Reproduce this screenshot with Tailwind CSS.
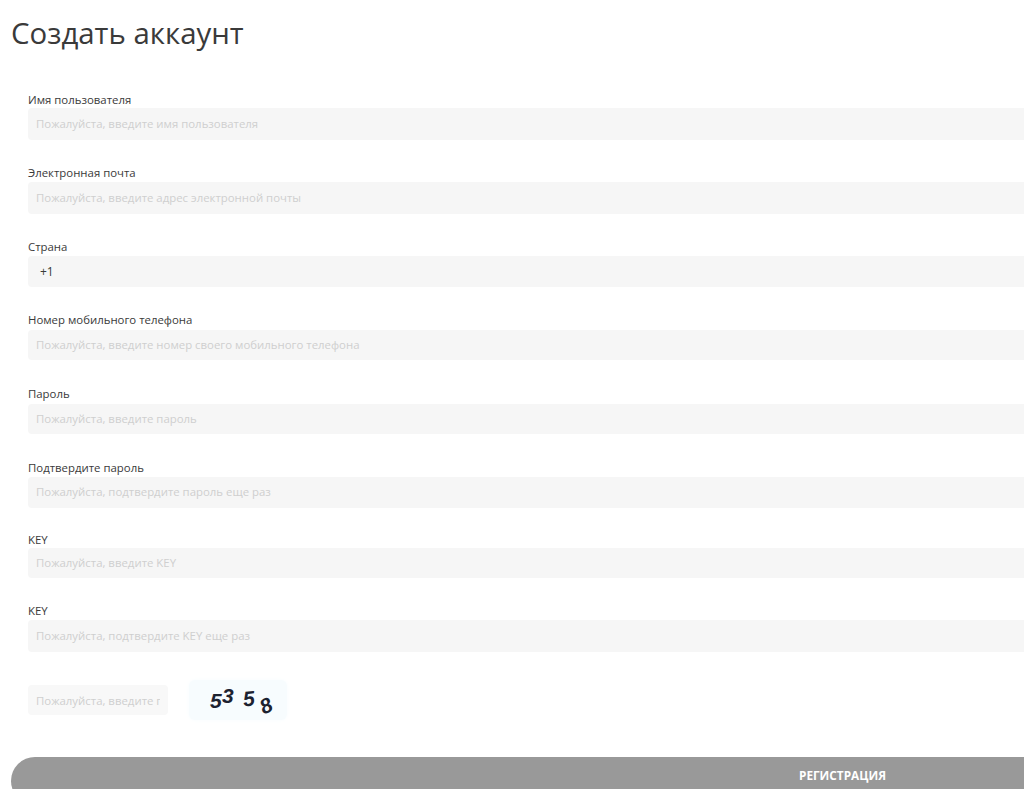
<!DOCTYPE html>
<html lang="ru">
<head>
    <meta charset="utf-8">
    <title>Создать аккаунт</title>
    <script src="https://cdn.jsdelivr.net/npm/@tailwindcss/browser@4"></script>
</head>
<body class="bg-white overflow-hidden h-[789px] font-['Open_Sans',sans-serif] text-[#3a3a3a]">
    <div class="w-[1674px] pl-[11px]">
        <h1 class="h-[66px] pt-[12px] text-[29.4px] leading-[42px] text-[#3a3a3a]">Создать аккаунт</h1>

        <form class="pl-[17px] pt-[25px]">
            <div class="h-[73px]">
                <label class="block h-[17px] text-[11.4px] leading-[17px]">Имя пользователя</label>
                <input type="text" placeholder="Пожалуйста, введите имя пользователя" class="block w-full h-[32px] px-[8px] pb-[2px] rounded bg-[#f6f6f6] text-[11.4px] placeholder:text-[#cfcfcf]">
            </div>
            <div class="h-[74px]">
                <label class="block h-[17px] mb-[1px] text-[11.4px] leading-[17px]">Электронная почта</label>
                <input type="text" placeholder="Пожалуйста, введите адрес электронной почты" class="block w-full h-[32px] px-[8px] pb-[2px] rounded bg-[#f6f6f6] text-[11.4px] placeholder:text-[#cfcfcf]">
            </div>
            <div class="h-[73px]">
                <label class="block h-[17px] mb-[1px] text-[11.4px] leading-[17px]">Страна</label>
                <div class="flex items-center w-full h-[31px] pl-[12px] rounded bg-[#f6f6f6] text-[12px] text-[#3a3a3a]">+1</div>
            </div>
            <div class="h-[74px]">
                <label class="block h-[17px] mb-[2px] text-[11.4px] leading-[17px]">Номер мобильного телефона</label>
                <input type="text" placeholder="Пожалуйста, введите номер своего мобильного телефона" class="block w-full h-[30px] px-[8px] pb-[2px] rounded bg-[#f6f6f6] text-[11.4px] placeholder:text-[#cfcfcf]">
            </div>
            <div class="h-[74px]">
                <label class="block h-[17px] mb-[2px] text-[11.4px] leading-[17px]">Пароль</label>
                <input type="password" placeholder="Пожалуйста, введите пароль" class="block w-full h-[30px] px-[8px] pb-[2px] rounded bg-[#f6f6f6] text-[11.4px] placeholder:text-[#cfcfcf]">
            </div>
            <div class="h-[73px]">
                <label class="block h-[17px] mb-[1px] text-[11.4px] leading-[17px]">Подтвердите пароль</label>
                <input type="password" placeholder="Пожалуйста, подтвердите пароль еще раз" class="block w-full h-[31px] px-[8px] pb-[2px] rounded bg-[#f6f6f6] text-[11.4px] placeholder:text-[#cfcfcf]">
            </div>
            <div class="h-[70px]">
                <label class="block h-[16px] text-[11.4px] leading-[16px]">KEY</label>
                <input type="text" placeholder="Пожалуйста, введите KEY" class="block w-full h-[30px] px-[8px] pb-[2px] rounded bg-[#f6f6f6] text-[11.4px] placeholder:text-[#cfcfcf]">
            </div>
            <div class="h-[78px]">
                <label class="block h-[17px] mb-[1px] text-[11.4px] leading-[17px]">KEY</label>
                <input type="text" placeholder="Пожалуйста, подтвердите KEY еще раз" class="block w-full h-[32px] px-[8px] pb-[2px] rounded bg-[#f6f6f6] text-[11.4px] placeholder:text-[#cfcfcf]">
            </div>

            <div class="flex items-center h-[40px]">
                <input type="text" placeholder="Пожалуйста, введите проверочный код" class="block w-[140px] h-[30px] px-[8px] rounded bg-[#f8f8f8] text-[11.4px] placeholder:text-[#cfcfcf]">
                <div class="relative ml-[21px] w-[98px] h-[40px] rounded-md bg-[#f7fcfe] shadow-[0_0_4px_#f7fcfe] font-['Liberation_Sans',sans-serif] font-bold italic text-[21px] leading-none text-[#1c2230]">
                    <span class="absolute left-[21px] top-[10px]">5</span>
                    <span class="absolute left-[33px] top-[5px]">3</span>
                    <span class="absolute left-[54px] top-[8px] -rotate-6">5</span>
                    <span class="absolute left-[71px] top-[15px] -rotate-[25deg]">8</span>
                </div>
            </div>
        </form>

        <button type="button" class="block w-full h-[48px] mt-[37px] pb-[11px] rounded-[24px] bg-[#999] text-white text-[11.8px] font-bold leading-[37px]">РЕГИСТРАЦИЯ</button>
    </div>
</body>
</html>
